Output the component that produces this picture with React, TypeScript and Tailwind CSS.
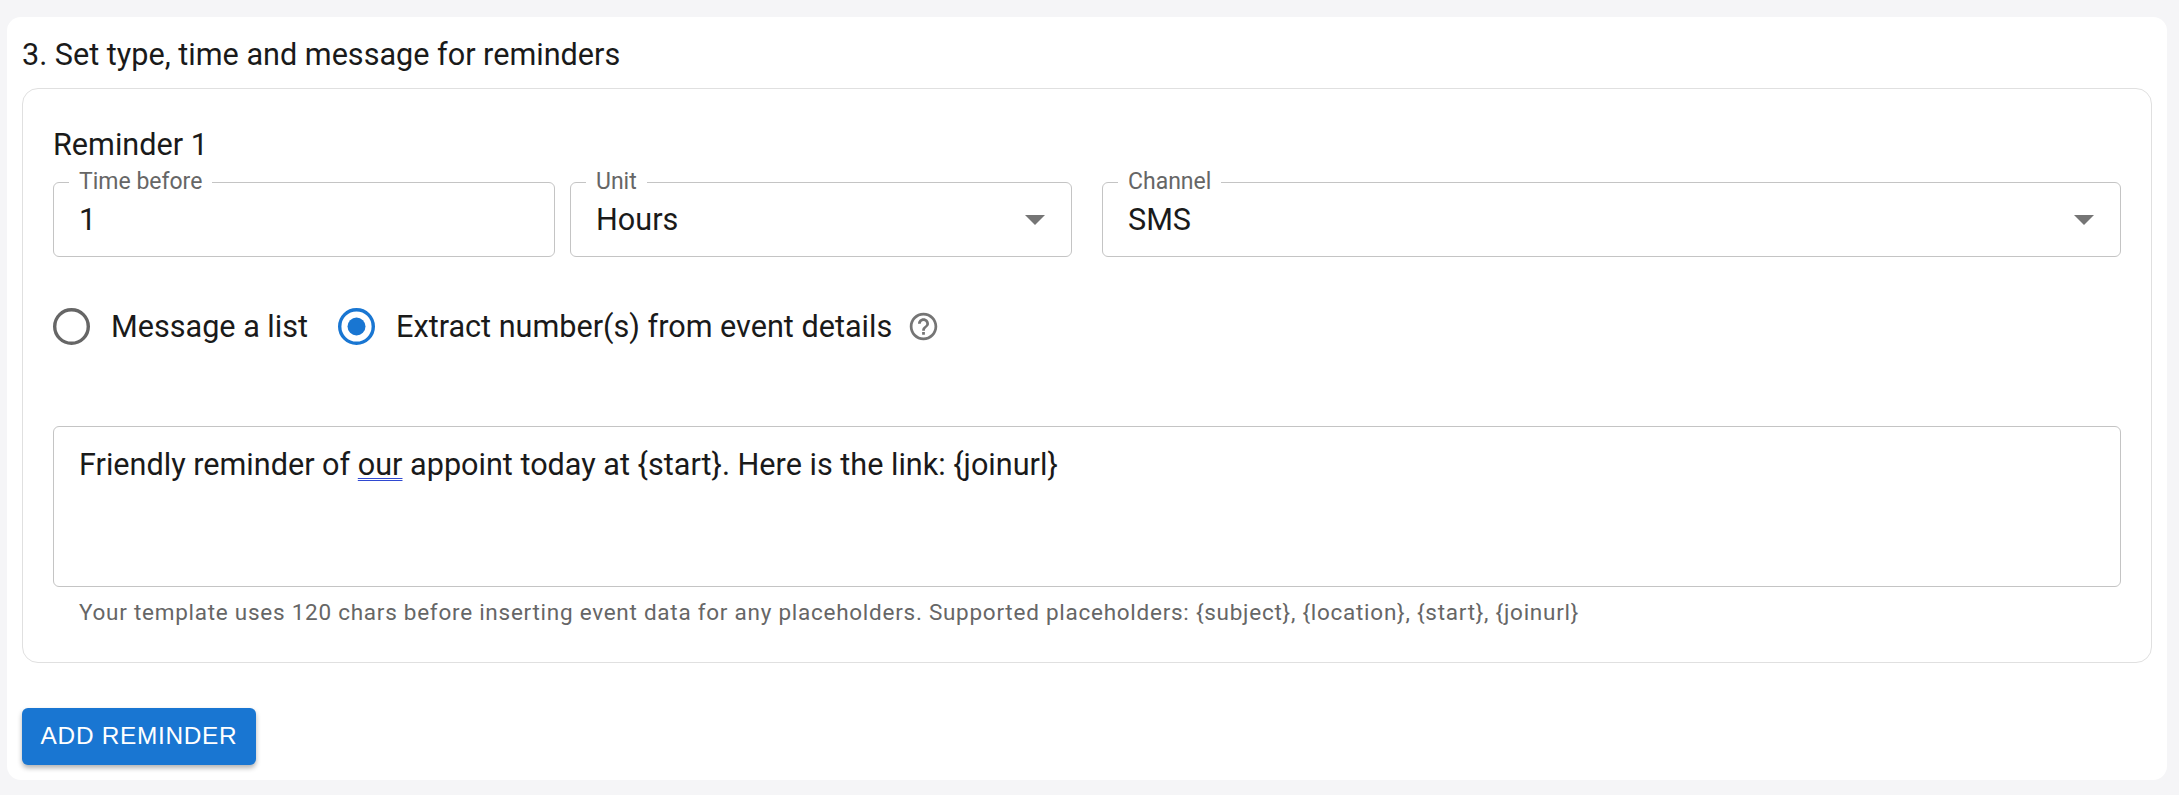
const outline = "relative border border-[#c4c4c4] rounded-[6px]";

function FieldLabel({ children }: { children: string }) {
  return (
    <span className="absolute left-[15px] top-[-14px] bg-white px-[10px] text-[23px] leading-[26px] text-[#666666]">
      {children}
    </span>
  );
}

function SelectField({ label, value, className }: { label: string; value: string; className: string }) {
  return (
    <div className={`${outline} ${className} h-[75px] flex items-center justify-between pl-[25px] pr-[26px]`}>
      <FieldLabel>{label}</FieldLabel>
      <span className="text-[30.6px] text-[#1a1a1a]">{value}</span>
      <svg width="20" height="10" viewBox="0 0 20 10" className="shrink-0">
        <path d="M0 0h20L10 10z" fill="#757575" />
      </svg>
    </div>
  );
}

function Radio({ label, checked }: { label: string; checked?: boolean }) {
  return (
    <label className="flex items-center gap-[21px]">
      <svg width="37" height="37" viewBox="0 0 37 37">
        <circle cx="18.5" cy="18.5" r="16.8" fill="none" stroke={checked ? "#1976d2" : "#666666"} strokeWidth="3.4" />
        {checked && <circle cx="18.5" cy="18.5" r="9" fill="#1976d2" />}
      </svg>
      <span className="text-[30.6px] text-[#1a1a1a]">{label}</span>
    </label>
  );
}

export default function App() {
  return (
    <div className="min-h-[795px] bg-[#f5f5f7] pt-[17px] pl-[7px] pr-[12px] font-['Roboto',sans-serif]">
      <div className="h-[763px] bg-white rounded-[14px] px-[15px] pt-[19px]">
        <h2 className="text-[30.6px] leading-[38px] text-[#1a1a1a]">3. Set type, time and message for reminders</h2>
        <div className="mt-[14px] h-[575px] border border-[#e0e0e0] rounded-[16px] pl-[30px] pr-[30px] pt-[40px]">
          <div className="text-[30.6px] leading-[32px] text-[#1a1a1a]">Reminder 1</div>
          <div className="mt-[21px] flex">
            <div className={`${outline} w-[502px] h-[75px] flex items-center pl-[25px]`}>
              <FieldLabel>Time before</FieldLabel>
              <span className="text-[30.6px] text-[#1a1a1a]">1</span>
            </div>
            <SelectField label="Unit" value="Hours" className="ml-[15px] w-[502px]" />
            <SelectField label="Channel" value="SMS" className="ml-[30px] flex-1" />
          </div>
          <div className="mt-[47px] flex items-center">
            <Radio label="Message a list" />
            <div className="w-[30px]" />
            <Radio label="Extract number(s) from event details" checked />
            <svg width="33" height="33" viewBox="0 0 24 24" fill="#757575" className="ml-[15px]">
              <path d="M11 18h2v-2h-2v2zm1-16C6.48 2 2 6.48 2 12s4.48 10 10 10 10-4.48 10-10S17.52 2 12 2zm0 18c-4.41 0-8-3.59-8-8s3.59-8 8-8 8 3.59 8 8-3.59 8-8 8zm0-14c-2.21 0-4 1.79-4 4h2c0-1.1.9-2 2-2s2 .9 2 2c0 2-3 1.75-3 5h2c0-2.25 3-2.5 3-5 0-2.21-1.79-4-4-4z" />
            </svg>
          </div>
          <div className="mt-[76px] h-[161px] border border-[#c4c4c4] rounded-[6px] px-[25px] pt-[22px] text-[30.6px] leading-[32px] text-[#1a1a1a]">
            Friendly reminder of{" "}
            <span className="underline decoration-double decoration-[#2f49d1] decoration-[1px] underline-offset-[3px]">our</span>{" "}
            appoint today at {"{start}"}. Here is the link: {"{joinurl}"}
          </div>
          <p className="mt-[13px] pl-[26px] text-[22.5px] leading-[25px] tracking-[0.74px] text-[#666666]">
            Your template uses 120 chars before inserting event data for any placeholders. Supported placeholders: {"{subject}"}, {"{location}"}, {"{start}"}, {"{joinurl}"}
          </p>
        </div>
        <button className="mt-[45px] h-[57px] w-[234px] rounded-[6px] bg-[#1976d2] font-['Liberation_Sans',sans-serif] text-[24.4px] tracking-[0.7px] text-white shadow-[0_3px_5px_rgba(0,0,0,0.3)]">
          ADD REMINDER
        </button>
      </div>
    </div>
  );
}
